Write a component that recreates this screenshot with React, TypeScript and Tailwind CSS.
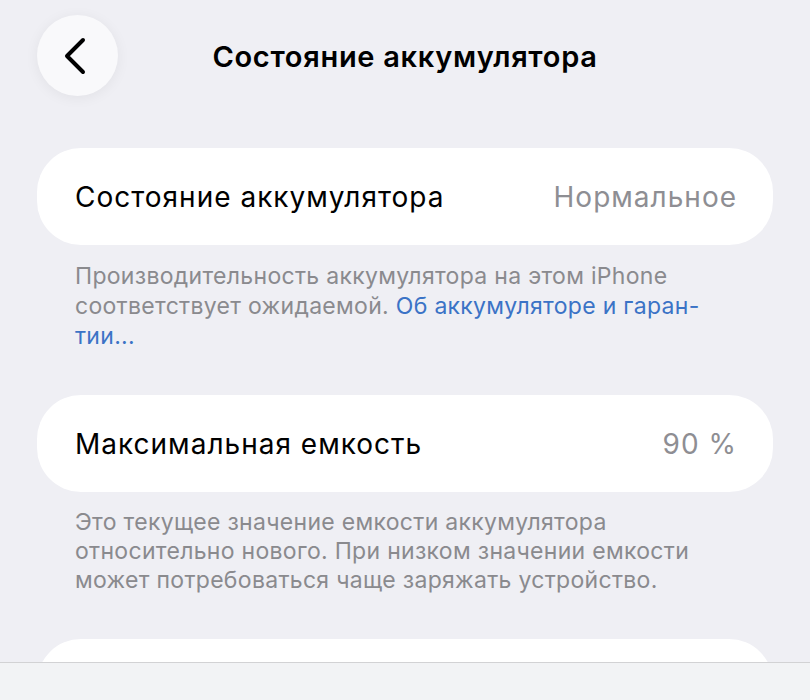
const font = { fontFamily: "Inter, Roboto, 'Noto Sans', sans-serif" };

function Row({ label, value }: { label: string; value: string }) {
  return (
    <div className="mx-[37px] flex h-[97px] items-center justify-between rounded-[44px] bg-white pr-[36px] pl-[38px]">
      <span className="text-[28px] tracking-[1px] text-black">{label}</span>
      <span className="text-[28px] tracking-[1px] text-[#8e8e93]">{value}</span>
    </div>
  );
}

export default function App() {
  return (
    <div className="flex h-[700px] w-full flex-col overflow-hidden bg-[#efeff4]" style={font}>
      <div className="flex h-[662px] flex-col overflow-hidden">
        <header className="grid grid-cols-[81px_1fr_81px] items-center px-[37px] pt-[15px]">
          <button
            type="button"
            className="flex size-[81px] items-center justify-center rounded-full bg-[#f9f9fb] shadow-[0_2px_14px_rgba(0,0,0,0.06)]"
          >
            <svg width="24" height="38" viewBox="0 0 24 38" fill="none" className="-ml-[6px]">
              <path
                d="M20 3 L4 19 L20 35"
                stroke="#000"
                strokeWidth="4"
                strokeLinecap="round"
                strokeLinejoin="round"
              />
            </svg>
          </button>
          <h1 className="pt-[3px] text-center text-[29px] font-semibold tracking-[0.7px] text-black">
            Состояние аккумулятора
          </h1>
          <div />
        </header>

        <div className="mt-[52px]">
          <Row label="Состояние аккумулятора" value="Нормальное" />
          <p className="mt-[16px] px-[75px] text-[23px] leading-[30px] tracking-[0.3px] text-[#8a8a8e]">
            Производительность аккумулятора на этом iPhone
            <br />
            соответствует ожидаемой.{" "}
            <span className="text-[#3b73c6]">
              Об аккумуляторе и гаран-
              <br />
              тии...
            </span>
          </p>
        </div>

        <div className="mt-[44px]">
          <Row label="Максимальная емкость" value="90 %" />
          <p className="mt-[16px] px-[75px] text-[23px] leading-[29px] tracking-[0.3px] text-[#8a8a8e]">
            Это текущее значение емкости аккумулятора
            <br />
            относительно нового. При низком значении емкости
            <br />
            может потребоваться чаще заряжать устройство.
          </p>
        </div>

        <div className="mx-[37px] mt-[44px] h-[120px] shrink-0 rounded-[44px] bg-white" />
      </div>
      <div className="h-[38px] border-t border-[#d2d2d4] bg-[#f2f3f5]" />
    </div>
  );
}
